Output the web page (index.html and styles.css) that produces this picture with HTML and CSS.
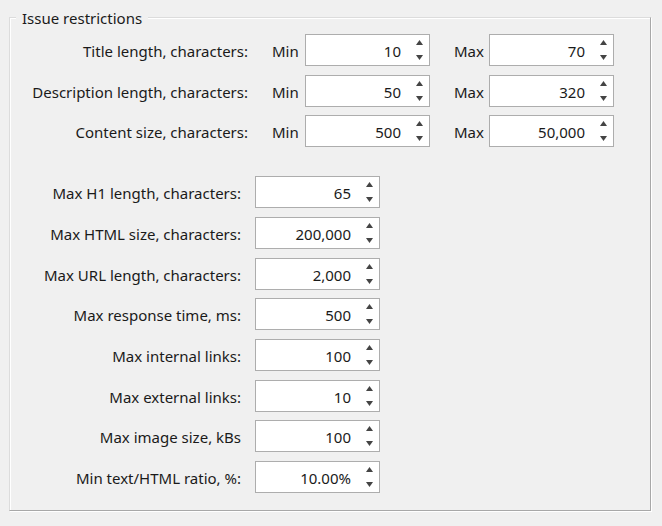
FILE: index.html
```html
<!DOCTYPE html>
<html>
<head>
<meta charset="utf-8">
<link rel="stylesheet" href="styles.css">
</head>
<body>
<div class="group">
  <span class="legend">Issue restrictions</span>
  <div class="range-rows">
    <div class="range-row">
      <span class="label">Title length, characters:</span>
      <span class="tag">Min</span>
      <div class="spin"><span class="val">10</span><span class="arrows"><svg width="7" height="5"><polygon points="0,5 3.5,0 7,5"/></svg><svg width="7" height="5"><polygon points="0,0 7,0 3.5,5"/></svg></span></div>
      <span class="tag tag-max">Max</span>
      <div class="spin"><span class="val">70</span><span class="arrows"><svg width="7" height="5"><polygon points="0,5 3.5,0 7,5"/></svg><svg width="7" height="5"><polygon points="0,0 7,0 3.5,5"/></svg></span></div>
    </div>
    <div class="range-row">
      <span class="label">Description length, characters:</span>
      <span class="tag">Min</span>
      <div class="spin"><span class="val">50</span><span class="arrows"><svg width="7" height="5"><polygon points="0,5 3.5,0 7,5"/></svg><svg width="7" height="5"><polygon points="0,0 7,0 3.5,5"/></svg></span></div>
      <span class="tag tag-max">Max</span>
      <div class="spin"><span class="val">320</span><span class="arrows"><svg width="7" height="5"><polygon points="0,5 3.5,0 7,5"/></svg><svg width="7" height="5"><polygon points="0,0 7,0 3.5,5"/></svg></span></div>
    </div>
    <div class="range-row">
      <span class="label">Content size, characters:</span>
      <span class="tag">Min</span>
      <div class="spin"><span class="val">500</span><span class="arrows"><svg width="7" height="5"><polygon points="0,5 3.5,0 7,5"/></svg><svg width="7" height="5"><polygon points="0,0 7,0 3.5,5"/></svg></span></div>
      <span class="tag tag-max">Max</span>
      <div class="spin"><span class="val">50,000</span><span class="arrows"><svg width="7" height="5"><polygon points="0,5 3.5,0 7,5"/></svg><svg width="7" height="5"><polygon points="0,0 7,0 3.5,5"/></svg></span></div>
    </div>
  </div>
  <div class="single-rows">
    <div class="single-row">
      <span class="label">Max H1 length, characters:</span>
      <div class="spin"><span class="val">65</span><span class="arrows"><svg width="7" height="5"><polygon points="0,5 3.5,0 7,5"/></svg><svg width="7" height="5"><polygon points="0,0 7,0 3.5,5"/></svg></span></div>
    </div>
    <div class="single-row">
      <span class="label">Max HTML size, characters:</span>
      <div class="spin"><span class="val">200,000</span><span class="arrows"><svg width="7" height="5"><polygon points="0,5 3.5,0 7,5"/></svg><svg width="7" height="5"><polygon points="0,0 7,0 3.5,5"/></svg></span></div>
    </div>
    <div class="single-row">
      <span class="label">Max URL length, characters:</span>
      <div class="spin"><span class="val">2,000</span><span class="arrows"><svg width="7" height="5"><polygon points="0,5 3.5,0 7,5"/></svg><svg width="7" height="5"><polygon points="0,0 7,0 3.5,5"/></svg></span></div>
    </div>
    <div class="single-row">
      <span class="label">Max response time, ms:</span>
      <div class="spin"><span class="val">500</span><span class="arrows"><svg width="7" height="5"><polygon points="0,5 3.5,0 7,5"/></svg><svg width="7" height="5"><polygon points="0,0 7,0 3.5,5"/></svg></span></div>
    </div>
    <div class="single-row">
      <span class="label">Max internal links:</span>
      <div class="spin"><span class="val">100</span><span class="arrows"><svg width="7" height="5"><polygon points="0,5 3.5,0 7,5"/></svg><svg width="7" height="5"><polygon points="0,0 7,0 3.5,5"/></svg></span></div>
    </div>
    <div class="single-row">
      <span class="label">Max external links:</span>
      <div class="spin"><span class="val">10</span><span class="arrows"><svg width="7" height="5"><polygon points="0,5 3.5,0 7,5"/></svg><svg width="7" height="5"><polygon points="0,0 7,0 3.5,5"/></svg></span></div>
    </div>
    <div class="single-row">
      <span class="label">Max image size, kBs</span>
      <div class="spin"><span class="val">100</span><span class="arrows"><svg width="7" height="5"><polygon points="0,5 3.5,0 7,5"/></svg><svg width="7" height="5"><polygon points="0,0 7,0 3.5,5"/></svg></span></div>
    </div>
    <div class="single-row">
      <span class="label">Min text/HTML ratio, %:</span>
      <div class="spin"><span class="val">10.00%</span><span class="arrows"><svg width="7" height="5"><polygon points="0,5 3.5,0 7,5"/></svg><svg width="7" height="5"><polygon points="0,0 7,0 3.5,5"/></svg></span></div>
    </div>
  </div>
</div>
</body>
</html>
```

FILE: styles.css
```css
html, body {
  margin: 0;
  padding: 0;
  background: #f0f0f0;
}

body {
  font-family: "Noto Sans", "Open Sans", sans-serif;
  font-size: 15px;
  color: #1a1a1a;
  height: 526px;
  overflow: hidden;
}

.group {
  position: relative;
  box-sizing: border-box;
  margin: 17px 0 0 9px;
  width: 642px;
  height: 494px;
  border: 1px solid;
  border-color: #dcdcdc #a8a8a8 #a8a8a8 #dcdcdc;
  box-shadow: inset 1px 1px 0 #fff, 1px 1px 0 #fff;
  padding-top: 16px;
}

.legend {
  position: absolute;
  top: -10px;
  left: 6px;
  padding: 0 6px;
  background: #f0f0f0;
  line-height: 20px;
}

.range-rows,
.single-rows {
  display: flex;
  flex-direction: column;
  gap: 8.67px;
}

.single-rows {
  margin-top: 29px;
}

.range-row,
.single-row {
  display: flex;
  align-items: center;
  height: 32px;
}

.label,
.tag {
  padding-top: 2px;
  white-space: nowrap;
}

.label {
  text-align: right;
}

.range-row .label {
  width: 238px;
}

.single-row .label {
  width: 231px;
  margin-right: 14px;
}

.tag {
  width: 33px;
  padding-left: 24px;
}

.tag-max {
  width: 35px;
}

.spin {
  box-sizing: border-box;
  width: 125px;
  height: 32px;
  background: #fff;
  border: 1px solid #adadad;
  display: flex;
  align-items: stretch;
}

.val {
  flex: 1;
  text-align: right;
  padding-right: 9px;
  line-height: 32px;
}

.arrows {
  width: 19px;
  display: flex;
  flex-direction: column;
  justify-content: space-between;
  align-items: center;
  padding: 5px 0;
}

.arrows svg {
  display: block;
  fill: #444;
}
```
